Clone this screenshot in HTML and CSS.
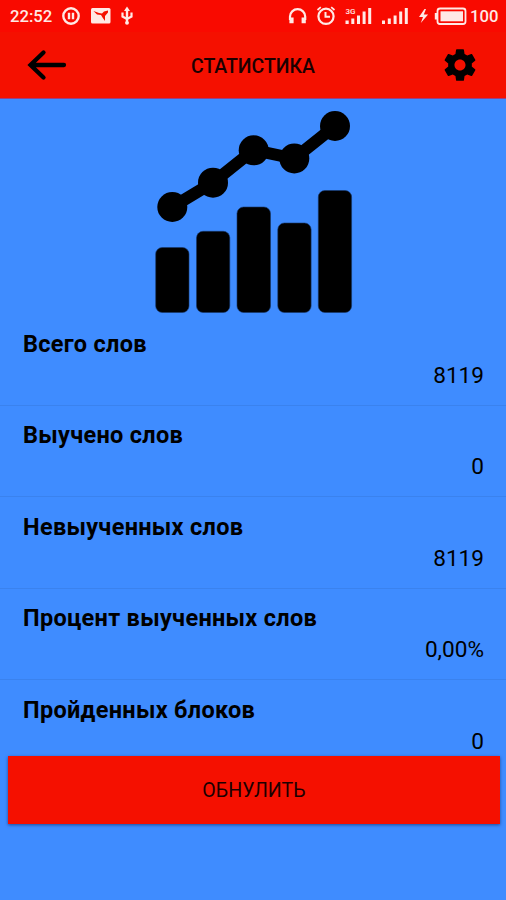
FILE: index.html
```html
<!DOCTYPE html>
<html lang="ru">
<head>
<meta charset="utf-8">
<title>Статистика</title>
<link rel="stylesheet" href="styles.css">
</head>
<body>
<header class="top">
  <div class="status">
    <span class="clock">22:52</span>
    <svg class="left-icons" width="74" height="32" viewBox="60 0 74 32">
      <circle cx="71" cy="16" r="7.7" fill="none" stroke="#ffe9e5" stroke-width="2.4"/>
      <path d="M69 12.700v6.600M73 12.700v6.600" stroke="#ffe9e5" stroke-width="2.400"/>
      <rect x="91" y="8" width="19.5" height="15.500" rx="1.500" fill="#ffe9e5"/>
      <path d="M93.500 11l3.500 3.500 4 .5 1.500 2.500 2.500 3.500v-5l3-3.500v-2l-4 1-2 2-3-.5z" fill="#f51000"/>
      <path d="M127 9v15" fill="none" stroke="#ffe9e5" stroke-width="2.400"/>
      <path d="M122.500 12.500v4l4.500 2.500 4.500-2.500v-4" fill="none" stroke="#ffe9e5" stroke-width="2.200"/>
      <path d="M124 11l3-4.500 3 4.500z" fill="#ffe9e5"/>
      <circle cx="127" cy="22.800" r="1.900" fill="#ffe9e5"/>
    </svg>
    <svg class="right-icons" width="181" height="32" viewBox="287 0 181 32">
      <g fill="none" stroke="#ffe9e5" stroke-width="2.200">
        <path d="M290 20v-3.500a7.600 7.300 0 0 1 15.200 0V20"/>
        <path d="M291.500 17.500v5.800M303.700 17.500v5.800" stroke-width="4.200"/>
        <circle cx="326" cy="16.300" r="7.600"/>
        <path d="M325.500 12v4.800h4.500" stroke-width="2"/>
        <path d="M317.500 10l3.300-2.800M331.200 7.200l3.300 2.800" stroke-width="1.700"/>
      </g>
      <g fill="#ffe9e5">
        <path d="M345.500 20.500h3.200v3.500h-3.200zM351.300 18.500h3v5.500h-3zM357 15.500h3V24h-3zM362.600 11.500h3V24h-3zM368.200 8h3v16h-3z"/>
        <path d="M382 20.500h3v3.500h-3zM387.800 18.500h3v5.500h-3zM393.600 15.500h3V24h-3zM399.200 11.500h3V24h-3zM404.800 8h3v16h-3z"/>
        <path d="M424.500 9l-5.500 8h4l-2.200 6 7.300-8.500h-4.300l2.200-5.500z"/>
        <rect x="440.500" y="11.300" width="22.500" height="10"/>
        <path d="M434.800 13h2.500v6.500h-2.500z"/>
      </g>
      <text class="network" x="345.500" y="14">3G</text>
      <rect x="437.500" y="8.500" width="28" height="15.500" rx="2.500" fill="none" stroke="#ffe9e5" stroke-width="1.800"/>
    </svg>
    <span class="charge">100</span>
  </div>
  <div class="toolbar">
    <svg width="42" height="36" viewBox="0 0 42 36"><path d="M38 18H5M17.500 5.500L4.500 18l13 12.500" fill="none" stroke="#000" stroke-width="4.300" stroke-linecap="round"/></svg>
    <h1 class="title">СТАТИСТИКА</h1>
    <svg width="38" height="38" viewBox="0 0 24 24"><path d="M19.430 12.980c.04-.32.07-.64.07-.98s-.03-.66-.07-.98l2.110-1.650c.19-.15.24-.42.12-.64l-2-3.460c-.12-.22-.39-.3-.61-.22l-2.490 1c-.52-.4-1.080-.73-1.690-.98l-.38-2.650C14.460 2.180 14.250 2 14 2h-4c-.25 0-.46.18-.49.42l-.38 2.650c-.61.25-1.170.59-1.690.98l-2.490-1c-.23-.09-.49 0-.61.22l-2 3.460c-.13.22-.07.49.12.64l2.110 1.650c-.04.32-.07.65-.07.98s.03.66.07.98l-2.110 1.650c-.19.15-.24.42-.12.64l2 3.460c.12.22.39.3.61.22l2.490-1c.52.4 1.080.73 1.690.98l.38 2.650c.03.24.24.42.49.42h4c.25 0 .46-.18.49-.42l.38-2.650c.61-.25 1.170-.59 1.690-.98l2.490 1c.23.09.49 0 .61-.22l2-3.460c.12-.22.07-.49-.12-.64l-2.110-1.650zM12 15.500c-1.930 0-3.500-1.570-3.500-3.500s1.570-3.500 3.500-3.500 3.500 1.570 3.500 3.500-1.570 3.500-3.500 3.500z"/></svg>
  </div>
</header>
<main>
  <svg class="chart" width="220" height="215" viewBox="144 99 220 215">
    <path d="M172.300 207L213 182.500 253.700 150l40.600 8.500L335 126" fill="none" stroke="#000" stroke-width="12"/>
    <circle cx="172.300" cy="207" r="15"/><circle cx="213" cy="182.700" r="15"/><circle cx="253.700" cy="150.300" r="15"/><circle cx="294.300" cy="158.500" r="15"/><circle cx="335" cy="126" r="15"/>
    <g stroke="#173666" stroke-width=".6">
    <rect x="155.700" y="247.500" width="33.300" height="65" rx="6.500"/>
    <rect x="196.500" y="231.300" width="33.300" height="81.200" rx="6.500"/>
    <rect x="237" y="207" width="33.500" height="105.500" rx="6.500"/>
    <rect x="277.800" y="223" width="33.300" height="89.500" rx="6.500"/>
    <rect x="318.300" y="190.500" width="33.300" height="122" rx="6.500"/>
    </g>
  </svg>
  <dl class="stats">
    <div class="row"><dt>Всего слов</dt><dd>8119</dd></div>
    <div class="row"><dt>Выучено слов</dt><dd>0</dd></div>
    <div class="row"><dt>Невыученных слов</dt><dd>8119</dd></div>
    <div class="row"><dt>Процент выученных слов</dt><dd>0,00%</dd></div>
    <div class="row"><dt>Пройденных блоков</dt><dd>0</dd></div>
  </dl>
  <button class="reset" type="button">ОБНУЛИТЬ</button>
</main>
</body>
</html>
```

FILE: styles.css
```css
* { box-sizing: border-box; }
body {
  margin: 0;
  height: 900px;
  overflow: hidden;
  background: #3f8cff;
  color: #000;
  font-family: Roboto, sans-serif;
}
svg { display: block; flex: none; }
.top {
  height: 99px;
  background: #f51000;
  border-bottom: 1px solid #9b3f83;
}
.status {
  display: flex;
  align-items: center;
  height: 32px;
  padding: 0 8px 0 10px;
  background: #f90a00;
  color: #ffe9e5;
  font-size: 16.7px;
  font-weight: 500;
}
.clock { width: 50px; white-space: nowrap; }
.right-icons { margin-left: auto; }
.charge { width: 28px; margin-left: 2px; }
.network { font-size: 8px; fill: #ffe9e5; }
.toolbar {
  display: flex;
  align-items: center;
  height: 66px;
  padding: 0 27px 0 26px;
}
.title {
  flex: 1;
  margin: 2px 0 0 123px;
  color: #1c0000;
  font-size: 19.5px;
  font-weight: 500;
  letter-spacing: -0.05px;
}
.chart { margin: 0 auto; position: relative; left: 1px; }
.stats { height: 442px; margin: 0; }
.row {
  height: 91.5px;
  padding: 14.5px 22px 0 23px;
  border-bottom: 1px solid #3a82ee;
}
.row:last-child { border: 0; }
.row dt {
  height: 31px;
  font-size: 23.5px;
  line-height: 31px;
  font-weight: 700;
  letter-spacing: 0.3px;
}
.row dd {
  margin: 0;
  font-size: 22.6px;
  line-height: 31px;
  text-align: right;
}
.reset {
  display: block;
  width: 492px;
  height: 68px;
  margin: 0 0 0 8px;
  padding: 0;
  border: 0;
  background: #f51000;
  color: #1c0000;
  font: 400 19.6px Roboto, sans-serif;
  box-shadow: 0 1px 3px rgba(0, 20, 70, 0.55);
}
```
